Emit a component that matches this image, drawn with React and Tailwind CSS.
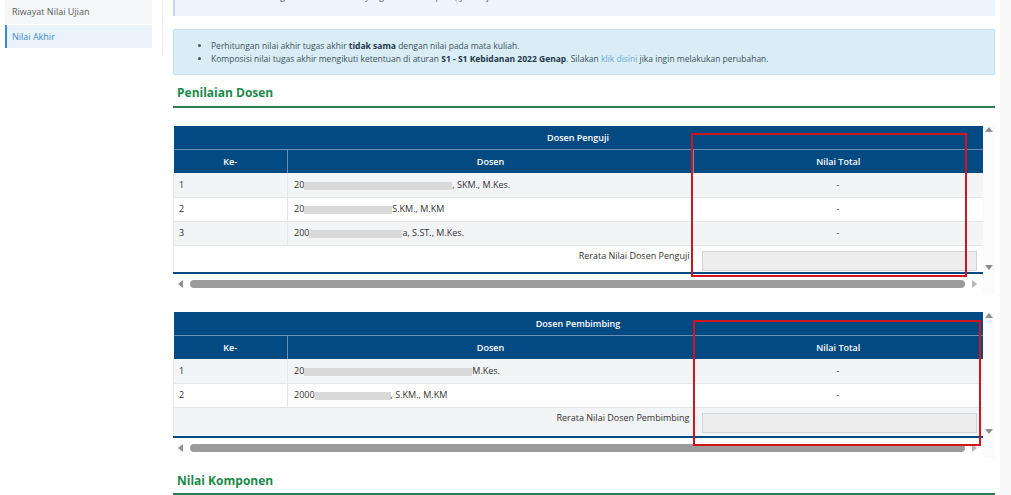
import React from 'react'

const penguji = [
  { no: 1, name: '20', blur: 'w-[148px]', tail: ', SKM., M.Kes.' },
  { no: 2, name: '20', blur: 'w-[88px]', tail: 'S.KM., M.KM' },
  { no: 3, name: '200', blur: 'w-[93px]', tail: 'a, S.ST., M.Kes.' },
]

const pembimbing = [
  { no: 1, name: '20', blur: 'w-[168px]', tail: 'M.Kes.' },
  { no: 2, name: '2000', blur: 'w-[76px]', tail: ', S.KM., M.KM' },
]

function Blur({ w }) {
  return <span className={`inline-block h-[8px] align-middle bg-[#dadada] ${w}`} />
}

function Arrow({ dir }) {
  const pts = {
    up: '0,5 4,0 8,5',
    down: '0,0 8,0 4,5',
    left: '5,0 5,8 0,4',
    right: '0,0 0,8 5,4',
  }[dir]
  const size = dir === 'up' || dir === 'down' ? 'w-[8px] h-[5px]' : 'w-[5px] h-[8px]'
  return (
    <svg className={size} viewBox={dir === 'up' || dir === 'down' ? '0 0 8 5' : '0 0 5 8'}>
      <polygon points={pts} fill={dir === 'right' ? '#b5b5b5' : '#8f8f8f'} />
    </svg>
  )
}

function ScoreTable({ title, rows, footer, footerStriped, footerH, box }) {
  return (
    <div className="relative flex bg-[#fbfbfb]">
      <div className="w-[809px] flex flex-col">
        <table className="w-[809px] border-collapse table-fixed text-[9px] text-[#333]">
          <colgroup>
            <col className="w-[114px]" />
            <col className="w-[406px]" />
            <col className="w-[289px]" />
          </colgroup>
          <thead>
            <tr className="bg-[#044a82] text-white h-[23px]">
              <th colSpan={3} className="font-semibold text-center border-b border-[#6a8fb3]">{title}</th>
            </tr>
            <tr className="bg-[#044a82] text-white h-[24px]">
              <th className="font-semibold text-center">Ke-</th>
              <th className="font-semibold text-center border-l border-[#6a8fb3]">Dosen</th>
              <th className="font-semibold text-center border-l border-[#6a8fb3]">Nilai Total</th>
            </tr>
          </thead>
          <tbody>
            {rows.map((r, i) => (
              <tr key={r.no} className={`h-[24px] border-b border-[#e4e6e8] ${i % 2 === 0 ? 'bg-[#f3f4f6]' : 'bg-white'}`}>
                <td className="pl-[5px] border-l border-[#e4e6e8]">{r.no}</td>
                <td className="pl-[6px] border-l border-[#e4e6e8] whitespace-nowrap">
                  {r.name}
                  <Blur w={r.blur} />
                  {r.tail}
                </td>
                <td className="text-center">-</td>
              </tr>
            ))}
            <tr className={`${footerH} border-b-2 border-[#044a82] ${footerStriped ? 'bg-[#f3f4f6]' : 'bg-white'}`}>
              <td colSpan={2} className="text-right pr-[4px] align-top pt-[3px] border-l border-[#e4e6e8]">{footer}</td>
              <td className="pl-[8px] pr-[6px] align-top pt-[5px]">
                <div className="h-[20px] bg-[#ededed] border border-[#d4d4d4]" />
              </td>
            </tr>
          </tbody>
        </table>
        <div className="h-[20px] flex items-center px-[5px] gap-[7px] bg-white">
          <Arrow dir="left" />
          <div className="flex-1 h-[8px] rounded-full bg-[#9b9b9b]" />
          <Arrow dir="right" />
        </div>
      </div>
      <div className="w-[13px] flex flex-col items-center justify-between pt-[1px] pb-[24px]">
        <Arrow dir="up" />
        <Arrow dir="down" />
      </div>
      <div className={`absolute border-2 border-[#d2141c] ${box}`} />
    </div>
  )
}

export default function App() {
  return (
    <div className="w-[1011px] h-[495px] overflow-hidden bg-white flex font-['Open_Sans',sans-serif]">
      <div className="w-[163px] shrink-0">
        <div className="h-[55px] border-r border-[#eeeeee] pl-[5px] pr-[10px]">
          <div className="h-[24px] bg-[#f5f6f8] flex items-center pl-[7px] text-[9px] text-[#5b5b5b]">Riwayat Nilai Ujian</div>
          <div className="h-[1px] bg-white" />
          <div className="h-[23px] bg-[#eaf3fb] border-l-2 border-[#3a8dcc] flex items-center pl-[5px] text-[9px] text-[#3a8dcc]">Nilai Akhir</div>
        </div>
      </div>

      <div className="ml-[10px] w-[822px] shrink-0 flex flex-col">
        <div className="h-[16px] overflow-hidden bg-[#eef5fc] border-l-2 border-[#c3d6e8]">
          <p className="-mt-[9px] pl-[35px] text-[8.5px] leading-[12px] text-[#555]">Nilai akhir dihitung berdasarkan bobot yang sudah ditetapkan, yaitu ujian.</p>
        </div>

        <div className="mt-[13px] h-[46px] bg-[#d9edf7] border border-[#bfe1f0] rounded-[2px] flex items-center">
          <ul className="pl-[37px] text-[8.5px] text-[#42515c] leading-[13px] list-disc">
            <li>
              Perhitungan nilai akhir tugas akhir <b className="text-[#24384a]">tidak sama</b> dengan nilai pada mata kuliah.
            </li>
            <li>
              Komposisi nilai tugas akhir mengikuti ketentuan di aturan <b className="text-[#24384a]">S1 - S1 Kebidanan 2022 Genap</b>. Silakan{' '}
              <span className="text-[#6fa8d8]">klik disini</span> jika ingin melakukan perubahan.
            </li>
          </ul>
        </div>

        <h2 className="mt-[10px] pl-[4px] text-[12px] font-bold text-[#1b8a4b] leading-[16px]">Penilaian Dosen</h2>
        <div className="mt-[5px] h-[2px] bg-[#2b7c50]" />

        <div className="mt-[18px]">
          <ScoreTable
            title="Dosen Penguji"
            rows={penguji}
            footer="Rerata Nilai Dosen Penguji"
            footerStriped={false}
            footerH="h-[28px]"
            box="left-[518px] top-[7px] w-[276px] h-[144px]"
          />
        </div>

        <div className="mt-[18px]">
          <ScoreTable
            title="Dosen Pembimbing"
            rows={pembimbing}
            footer="Rerata Nilai Dosen Pembimbing"
            footerStriped={true}
            footerH="h-[30px]"
            box="left-[520px] top-[8px] w-[288px] h-[126px]"
          />
        </div>

        <h2 className="mt-[15px] pl-[4px] text-[12px] font-bold text-[#1b8a4b] leading-[16px]">Nilai Komponen</h2>
        <div className="mt-[4px] h-[2px] bg-[#2b7c50]" />
      </div>

      <div className="ml-[5px] flex-1 bg-[#f8f8f8]" />
    </div>
  )
}
